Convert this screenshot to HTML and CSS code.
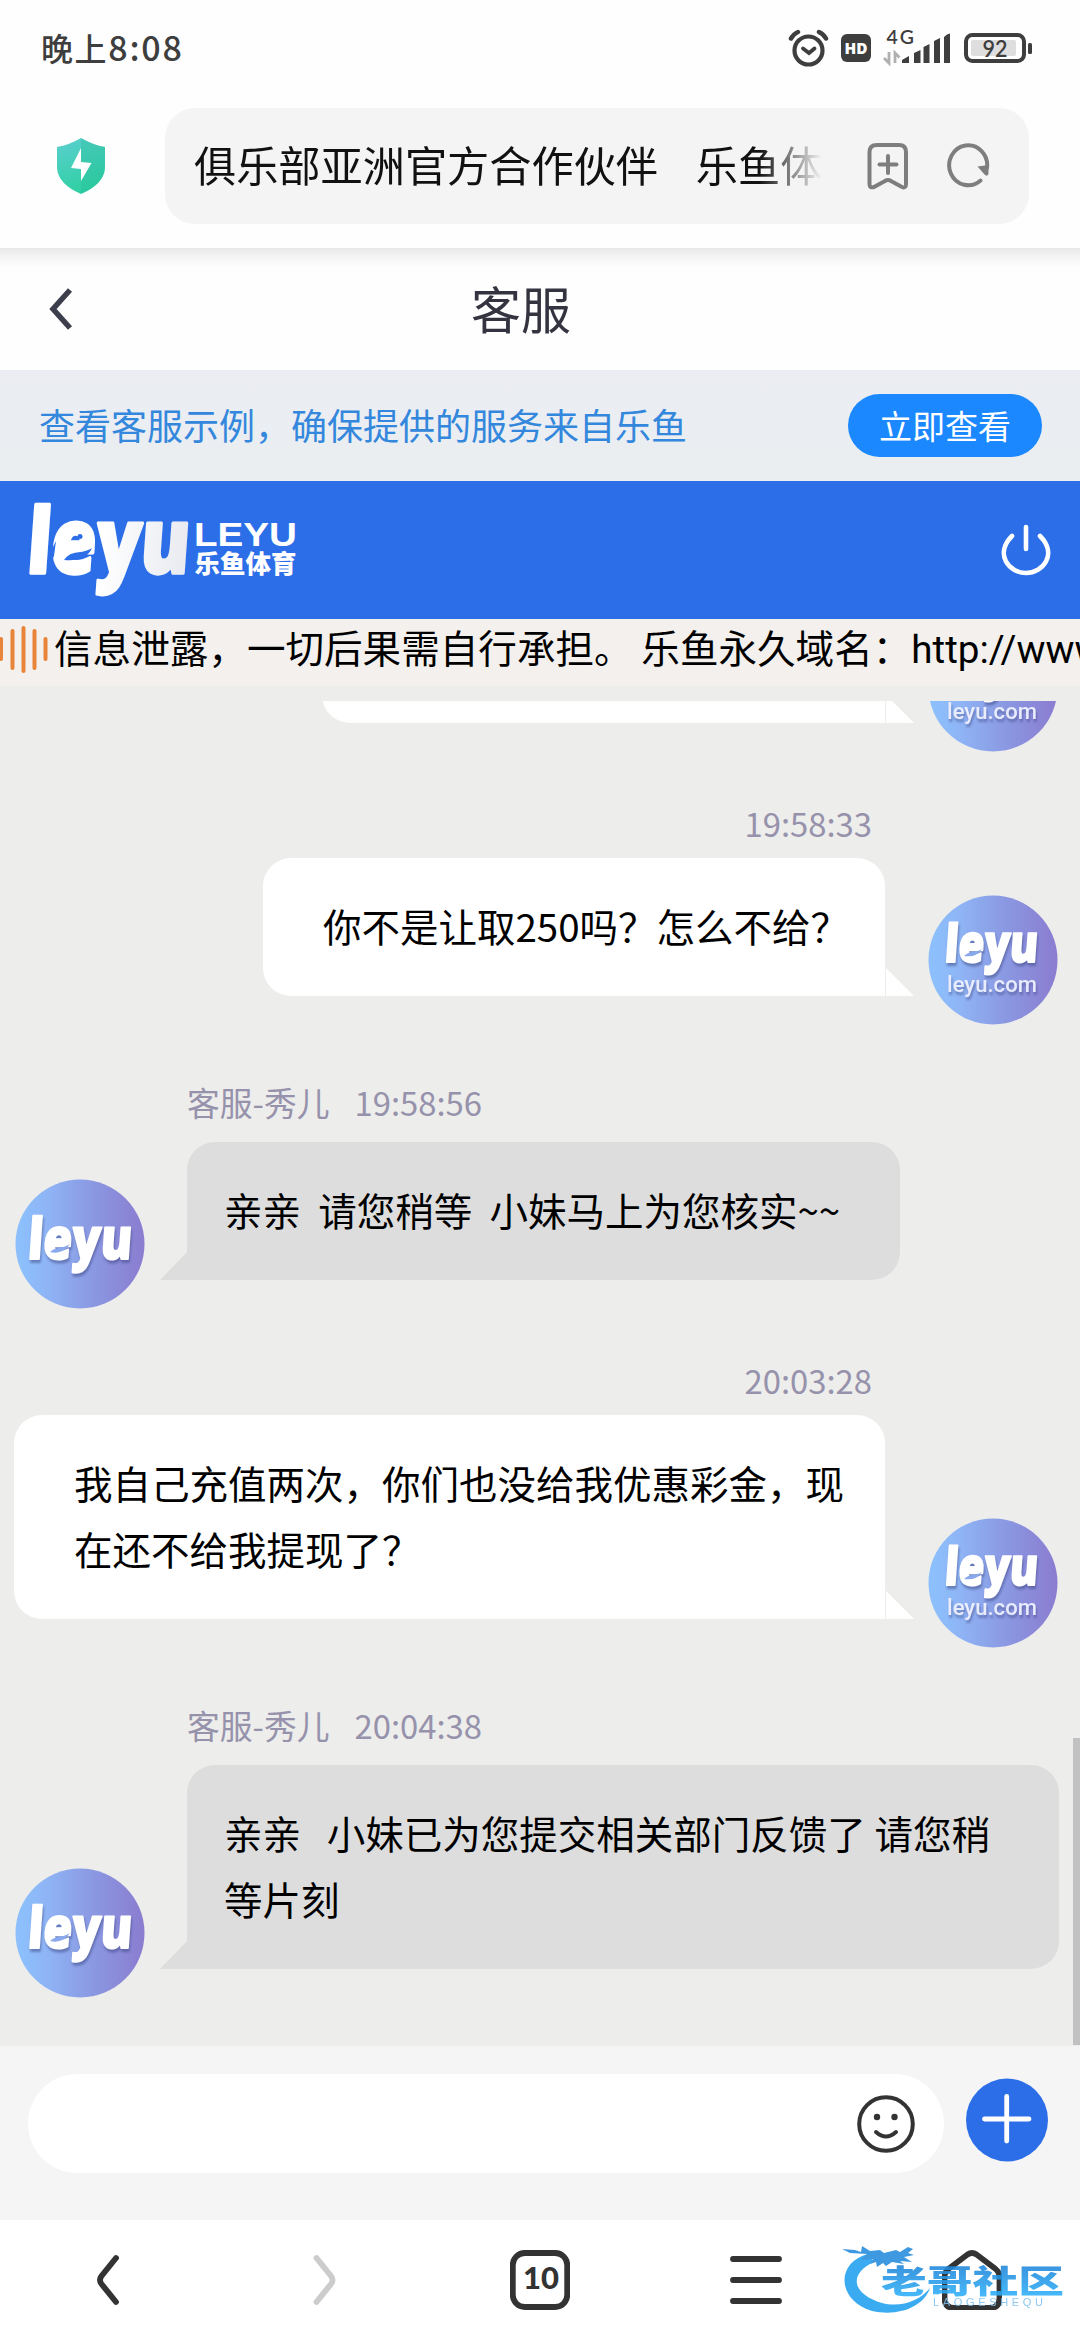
FILE: index.html
```html
<!DOCTYPE html>
<html lang="zh-CN">
<head>
<meta charset="utf-8">
<title>客服</title>
<link rel="stylesheet" href="styles.css">
</head>
<body>
<svg class="defs" width="0" height="0" aria-hidden="true">
  <defs>
    <linearGradient id="avatarFill" x1="0" x2="1" y1="0" y2="0">
      <stop offset="0.05" stop-color="#8cbffb"/><stop offset="0.25" stop-color="#8fb4f5"/><stop offset="0.6" stop-color="#8a98e2"/><stop offset="1" stop-color="#8b7cd0"/>
    </linearGradient>
    <symbol id="avatarUser" viewBox="0 0 130 130">
      <ellipse cx="65" cy="65" rx="64.5" ry="64.5" fill="url(#avatarFill)"/>
      <g class="avatar-shadow">
        <text class="wordmark" transform="translate(16 67) skewX(-4)" font-size="52" stroke-width="2" textLength="93" lengthAdjust="spacingAndGlyphs">leyu</text>
        <text class="domain" x="19" y="97" textLength="90" lengthAdjust="spacingAndGlyphs">leyu.com</text>
      </g>
      <path d="M36 61C42 55 48 58 54 54Q48 63 36 61Z" fill="#8aa9ec"/>
    </symbol>
    <symbol id="avatarAgent" viewBox="0 0 130 130">
      <ellipse cx="65" cy="65" rx="64.5" ry="64.5" fill="url(#avatarFill)"/>
      <g class="avatar-shadow">
        <text class="wordmark" transform="translate(12 80) skewX(-4)" font-size="57" stroke-width="2" textLength="104" lengthAdjust="spacingAndGlyphs">leyu</text>
      </g>
      <path d="M35 73C41 67 48 70 55 65Q48 76 35 73Z" fill="#8aa9ec"/>
    </symbol>
  </defs>
</svg>

<header class="status">
  <span class="clock">晚上<b>8:08</b></span>
  <svg class="status-icons" width="246" height="46" viewBox="788 24 246 46">
    <g fill="none" stroke="#3e3e3e" stroke-width="4.2" stroke-linecap="round">
      <circle cx="808.5" cy="50.5" r="14"/>
      <path d="M803 48.5l6 4.5 5.500-4.500" stroke-width="3.800"/>
      <path d="M791 38.500q3-5 7-6.500M819 32q4.500 2 7 6.500" stroke-width="4.500"/>
    </g>
    <rect x="841" y="34" width="30" height="28" rx="6" fill="#3e3e3e"/>
    <text x="844.500" y="53.800" font-size="16" textLength="23" lengthAdjust="spacingAndGlyphs" fill="#fff" class="status-bold">HD</text>
    <text x="886.500" y="43.500" font-size="19.500" textLength="27.500" fill="#3e3e3e" class="status-mid">4G</text>
    <path d="M889 52v11l-5-5M895 63V53l4.500 4.500" fill="none" stroke="#b0b0b0" stroke-width="2.800"/>
    <g fill="#3e3e3e">
      <path d="M902 63v-3l7-4v7zM914 63V53l6.500-3v13zM923.500 63V47l6-3v19zM934 63V41l6-3v25zM944 63V37q3-3.500 6-3.500V63z"/>
      <rect x="1028" y="43" width="4" height="11" rx="1.500"/>
    </g>
    <rect x="966" y="35" width="58" height="26" rx="6.500" fill="#fff" stroke="#3e3e3e" stroke-width="4"/>
    <rect x="971" y="40" width="45" height="16" rx="2" fill="#dedede"/>
    <text x="982.500" y="57" font-size="23" textLength="25" lengthAdjust="spacingAndGlyphs" fill="#3e3e3e" class="status-mid">92</text>
  </svg>
</header>

<div class="browser-bar">
  <svg class="shield" width="50" height="56" viewBox="0 0 50 56">
    <defs><linearGradient id="sg" x1="0" x2="0.300" y1="0" y2="1"><stop offset="0" stop-color="#5ccfd0"/><stop offset="1" stop-color="#30d0a4"/></linearGradient></defs>
    <path d="M25 0Q37 7 49 9V30Q48 46 25 56Q2 46 1 30V9Q13 7 25 0Z" fill="url(#sg)"/>
    <path d="M25 0Q37 7 49 9V30Q48 46 25 56Z" fill="#1fb894" opacity=".28"/>
    <path d="M25 10V24L35.500 25 25 43V31L15 30Z" fill="#fff"/>
  </svg>
  <div class="address">
    <span class="address-text">俱乐部亚洲官方合作伙伴    乐鱼体</span>
    <svg width="42" height="48" viewBox="0 0 42 48" fill="none" stroke="#7e7e7e" stroke-width="4" stroke-linecap="round" stroke-linejoin="round">
      <path d="M2.500 10Q2.500 3 10 3H32Q39 3 39 10V42Q39 46.500 35 45L24 39Q21 37 18 39L7 45Q2.500 46.500 2.500 42Z"/>
      <path d="M21 14V31M12.500 22.500H29.500"/>
    </svg>
    <svg width="44" height="46" viewBox="0 0 44 46">
      <path d="M34.500 37.500A19 20 0 1 1 41 25" fill="none" stroke="#7e7e7e" stroke-width="4" stroke-linecap="round"/>
      <path d="M31.500 23.500L42.500 22V31Q41 34 38.500 31.500Z" fill="#7e7e7e"/>
    </svg>
  </div>
</div>

<div class="title-bar">
  <svg width="24" height="42" viewBox="0 0 24 42"><path d="M21 2L4 21L21 40" fill="none" stroke="#3d3e4c" stroke-width="5.500"/></svg>
  <h1>客服</h1>
</div>

<div class="notice">
  <span>查看客服示例，确保提供的服务来自乐鱼</span>
  <button>立即查看</button>
</div>

<div class="brand">
  <svg width="280" height="130" viewBox="20 485 280 130">
    <defs><linearGradient id="lg" x1="0" x2="1"><stop offset=".45" stop-color="#fff"/><stop offset="1" stop-color="#e8eaf0"/></linearGradient></defs>
    <text class="wordmark shaded" transform="translate(26 573) skewX(-4)" font-size="90" stroke-width="3.500" textLength="162" lengthAdjust="spacingAndGlyphs">leyu</text>
    <path d="M64 560C72 549 81 555 92 548Q86 562 64 560Z" fill="#2c6ee8"/>
    <path d="M48 557L56 541L54 556L49 566Z" fill="#2c6ee8"/>
    <circle cx="80" cy="536.500" r="2.500" fill="#2c6ee8"/>
    <text class="brand-latin" x="194" y="546" textLength="103" lengthAdjust="spacingAndGlyphs">LEYU</text>
    <text class="brand-cn" x="194.500" y="573" textLength="102">乐鱼体育</text>
  </svg>
  <svg width="50" height="54" viewBox="0 0 50 54" fill="none" stroke="#fff" stroke-width="4.600" stroke-linecap="round">
    <path d="M11 13C-7 31 8 50 25 50S57 31 39 13M25 4V26"/>
  </svg>
</div>

<div class="marquee">
  <svg width="48" height="50" viewBox="0 0 48 50" stroke="#e8853a" stroke-width="4" stroke-linecap="round"><path d="M1 14V34M12.500 6V43M23.500 3V46M34.500 6V43M45.500 14V34"/></svg>
  <span>信息泄露，一切后果需自行承担。 乐鱼永久域名：<i>http://www</i></span>
</div>

<main class="chat">
  <div class="thread">
    <section class="message user previous">
      <div class="row"><p class="bubble"></p><svg class="avatar"><use href="#avatarUser"/></svg></div>
    </section>
    <section class="message user">
      <div class="meta">19:58:33</div>
      <div class="row"><p class="bubble">你不是让取250吗？怎么不给？</p><svg class="avatar"><use href="#avatarUser"/></svg></div>
    </section>
    <section class="message agent">
      <div class="meta"><span>客服-秀儿</span><span>19:58:56</span></div>
      <div class="row"><svg class="avatar"><use href="#avatarAgent"/></svg><p class="bubble">亲亲  请您稍等  小妹马上为您核实~~</p></div>
    </section>
    <section class="message user wide">
      <div class="meta">20:03:28</div>
      <div class="row"><p class="bubble">我自己充值两次，你们也没给我优惠彩金，现<br>在还不给我提现了？</p><svg class="avatar"><use href="#avatarUser"/></svg></div>
    </section>
    <section class="message agent wide">
      <div class="meta"><span>客服-秀儿</span><span>20:04:38</span></div>
      <div class="row"><svg class="avatar"><use href="#avatarAgent"/></svg><p class="bubble">亲亲   小妹已为您提交相关部门反馈了 请您稍<br>等片刻</p></div>
    </section>
  </div>
  <div class="scrollbar"></div>
</main>

<div class="composer">
  <div class="input">
    <svg width="60" height="60" viewBox="0 0 60 60"><circle cx="30" cy="30" r="26.800" fill="none" stroke="#333" stroke-width="4"/><circle cx="21" cy="23" r="3.200" fill="#333"/><circle cx="38.500" cy="23" r="3.200" fill="#333"/><path d="M20 38Q30 47 40 38" fill="none" stroke="#333" stroke-width="4" stroke-linecap="round"/></svg>
  </div>
  <svg class="plus" width="82" height="84" viewBox="0 0 82 84"><ellipse cx="41" cy="42" rx="41" ry="41.500" fill="#2c6ee8"/><path d="M40.700 18.500V63M18.500 41H63" stroke="#fff" stroke-width="4.800" stroke-linecap="round"/></svg>
</div>

<nav class="nav">
  <svg viewBox="0 0 60 60"><path d="M38 8L23.500 26Q20.500 30 23.500 34L38 52" class="line"/></svg>
  <svg viewBox="0 0 60 60"><path d="M22.500 8L37 26Q40 30 37 34L22.500 52" class="line muted"/></svg>
  <svg viewBox="0 0 60 60"><rect x="2.800" y="3" width="54.400" height="54" rx="12" class="line"/><text x="31" y="38.500" text-anchor="middle" class="tab-count">10</text></svg>
  <svg viewBox="0 0 60 60"><path d="M7 9H53M7 30H53M7 51H53" class="line"/></svg>
  <svg viewBox="0 0 60 60"><path d="M25.500 4.500Q30 1.500 34.500 4.500L53 18.500Q57.500 22 57.500 27V48Q57.500 58 47.500 58H12.500Q2.500 58 2.500 48V27Q2.500 22 7 18.500Z" class="line"/></svg>
  <svg class="watermark" width="230" height="80" viewBox="838 2240 230 80">
    <defs><linearGradient id="wg" x1="0" x2="0" y1="0" y2="1"><stop offset="0" stop-color="#1a78d0"/><stop offset="1" stop-color="#30b8ff"/></linearGradient></defs>
    <path d="M868 2254C836 2262 836 2300 872 2311C900 2317 924 2306 930 2288C920 2301 900 2308 882 2303C852 2294 848 2274 874 2262Z" fill="#20a0f0"/>
    <path d="M842 2249L855 2250L861 2252L862 2246L870 2251L880 2250L884 2253L896 2250L900 2252L908 2247L913 2249L908 2253L914 2255L904 2257L912 2262L900 2261L904 2264L892 2262L886 2266L883 2263L877 2267L876 2262L870 2264L873 2259L860 2260L867 2254L850 2253Z" fill="#258bdc"/>
    <text x="881" y="2293" textLength="183" lengthAdjust="spacingAndGlyphs" class="wm-cn">老哥社区</text>
    <text x="933" y="2305.500" textLength="110" class="wm-latin">LAOGESHEQU</text>
  </svg>
</nav>
</body>
</html>
```
FILE: styles.css
```css
* { box-sizing: border-box; }

body {
  margin: 0;
  width: 1080px;
  height: 2340px;
  overflow: hidden;
  display: flex;
  flex-direction: column;
  background: #fefefe;
  font-family: "Noto Sans CJK SC", sans-serif;
}

svg { display: block; flex: none; }
.defs { position: absolute; }

.status {
  height: 98px;
  padding: 0 46px 4px 41px;
  display: flex;
  align-items: center;
  justify-content: space-between;
}
.clock { font-size: 32px; line-height: 48px; letter-spacing: 1.6px; color: #3e3e3e; font-weight: 500; }
.clock b { font-size: 34px; font-weight: 500; letter-spacing: 1.8px; }
.status-bold { font-family: "Open Sans", sans-serif; font-weight: 800; }
.status-mid { font-family: Lato, sans-serif; font-weight: 600; }

.browser-bar {
  height: 150px;
  padding: 10px 51px 26px 56px;
  display: flex;
  align-items: flex-start;
  gap: 59px;
}
.shield { margin-top: 30px; }
.address {
  flex: 1;
  height: 116px;
  padding: 0 38px 0 29px;
  border-radius: 30px;
  background: #f4f4f4;
  display: flex;
  align-items: center;
}
.address-text {
  width: 628px;
  margin-right: 45px;
  padding-bottom: 4px;
  overflow: hidden;
  white-space: pre;
  font-size: 42.2px;
  line-height: 60px;
  color: #111;
  -webkit-mask-image: linear-gradient(90deg, #000 565px, transparent 628px);
  mask-image: linear-gradient(90deg, #000 565px, transparent 628px);
}
.address svg + svg { margin-left: 37px; }

.title-bar {
  height: 122px;
  padding: 0 0 0 49px;
  display: flex;
  align-items: center;
  background: linear-gradient(#e8e8e8, #f4f4f4 9px, #fefefe 19px);
}
.title-bar h1 {
  margin: 0 0 4px 398px;
  font-size: 50px;
  line-height: 72px;
  font-weight: 400;
  color: #33343f;
}

.notice {
  height: 111px;
  padding: 0 38px 0 39px;
  display: flex;
  align-items: center;
  justify-content: space-between;
  background: linear-gradient(#ebedf3, #eaeef0);
  font-size: 36px;
  color: #3387dc;
}
.notice span { padding-bottom: 3px; }
.notice button {
  width: 194px;
  height: 63px;
  padding: 0;
  border: 0;
  border-radius: 32px;
  background: #1b88ff;
  color: #fff;
  font: 33px/63px "Noto Sans CJK SC", sans-serif;
}

.brand {
  height: 138px;
  padding: 0 29px 0 20px;
  display: flex;
  align-items: center;
  justify-content: space-between;
  background: #2c6ee8;
}
.wordmark { font-family: "Open Sans", sans-serif; font-weight: 800; fill: #fff; stroke: #fff; stroke-linejoin: round; }
.shaded { fill: url(#lg); stroke: url(#lg); }
.brand-latin { font: 700 33px "Liberation Sans", sans-serif; fill: #fff; }
.brand-cn { font: 900 25.5px "Noto Sans CJK SC", sans-serif; fill: #fff; }

.marquee {
  height: 67px;
  display: flex;
  align-items: center;
  gap: 6px;
  overflow: hidden;
  background: #f3f0ed;
  white-space: nowrap;
  font-size: 38.6px;
  line-height: 56px;
}
.marquee svg { margin-bottom: 5px; }
.marquee span { padding-bottom: 9px; }
.marquee i { font-family: Roboto, sans-serif; font-style: normal; }

.chat {
  height: 1360px;
  padding-top: 15px;
  display: flex;
  background: #ededeb;
}
.thread { flex: 1; overflow: hidden; }
.scrollbar {
  width: 7px;
  height: 307px;
  margin-top: 1037px;
  background: #c1c1c1;
}

.meta { height: 40px; font-size: 32.8px; line-height: 36px; color: #9692ab; }
.row { display: flex; align-items: flex-end; }
.avatar { width: 130px; height: 130px; margin-bottom: -29px; }
.avatar-shadow { filter: drop-shadow(1px 3px 1px rgba(60, 70, 130, .5)); }
.domain { font: 500 21.5px Roboto, sans-serif; fill: #e8ecfc; }

.bubble {
  position: relative;
  margin: 0;
  padding: 34px 0 38px;
  white-space: pre-wrap;
  font-size: 38.5px;
  line-height: 66px;
  color: #000;
}
.bubble::after {
  content: "";
  position: absolute;
  bottom: 0;
  width: 28px;
  height: 28px;
}

.user { padding: 0 15px 0 14px; }
.user .meta { margin: 82px 186px 13px 0; text-align: right; }
.user .row { justify-content: flex-end; gap: 43px; }
.user .bubble {
  padding-left: 60px;
  padding-right: 36px;
  border-radius: 28px 28px 0 28px;
  background: #fff;
}
.user .bubble::after {
  left: calc(100% + 1px);
  background: #fff;
  clip-path: polygon(0 0, 100% 100%, 0 100%);
}
.user.wide .bubble { width: 871px; padding-right: 0; }
.previous .row { height: 22px; }
.previous .bubble { width: 563px; height: 137px; }

.agent { padding-left: 15px; }
.agent .meta { margin: 88px 0 18px 172px; display: flex; gap: 25px; }
.agent .row { gap: 42px; }
.agent .bubble {
  padding-left: 37px;
  padding-right: 60px;
  border-radius: 28px 28px 28px 0;
  background: #ddd;
}
.agent .bubble::after {
  right: 100%;
  width: 27px;
  background: #ddd;
  clip-path: polygon(100% 0, 100% 100%, 0 100%);
}
.agent.wide .bubble { width: 872px; padding-right: 0; }

.composer {
  height: 174px;
  padding: 28px 32px 0 28px;
  display: flex;
  align-items: flex-start;
  gap: 22px;
  background: #f5f5f5;
}
.input {
  width: 916px;
  height: 99px;
  padding-right: 28px;
  border-radius: 50px;
  display: flex;
  align-items: center;
  justify-content: flex-end;
  background: #fff;
}
.plus { margin-top: 4px; }

.nav {
  position: relative;
  flex: 1;
  display: grid;
  grid-template-columns: repeat(5, 1fr);
  place-items: center;
  background: #fff;
}
.nav > svg { width: 60px; height: 60px; }
.line { fill: none; stroke: #333; stroke-width: 5.8; stroke-linecap: round; stroke-linejoin: round; }
.muted { stroke: #ccc; }
.tab-count { font: 900 31px Lato, sans-serif; fill: #333; }
.nav > .watermark { position: absolute; left: 838px; top: 20px; width: 230px; height: 80px; opacity: .88; }
.wm-cn { font: 900 32px "Noto Sans CJK SC", sans-serif; fill: url(#wg); }
.wm-latin { font: 11px "Liberation Sans", sans-serif; fill: #7cc0f0; }
```
